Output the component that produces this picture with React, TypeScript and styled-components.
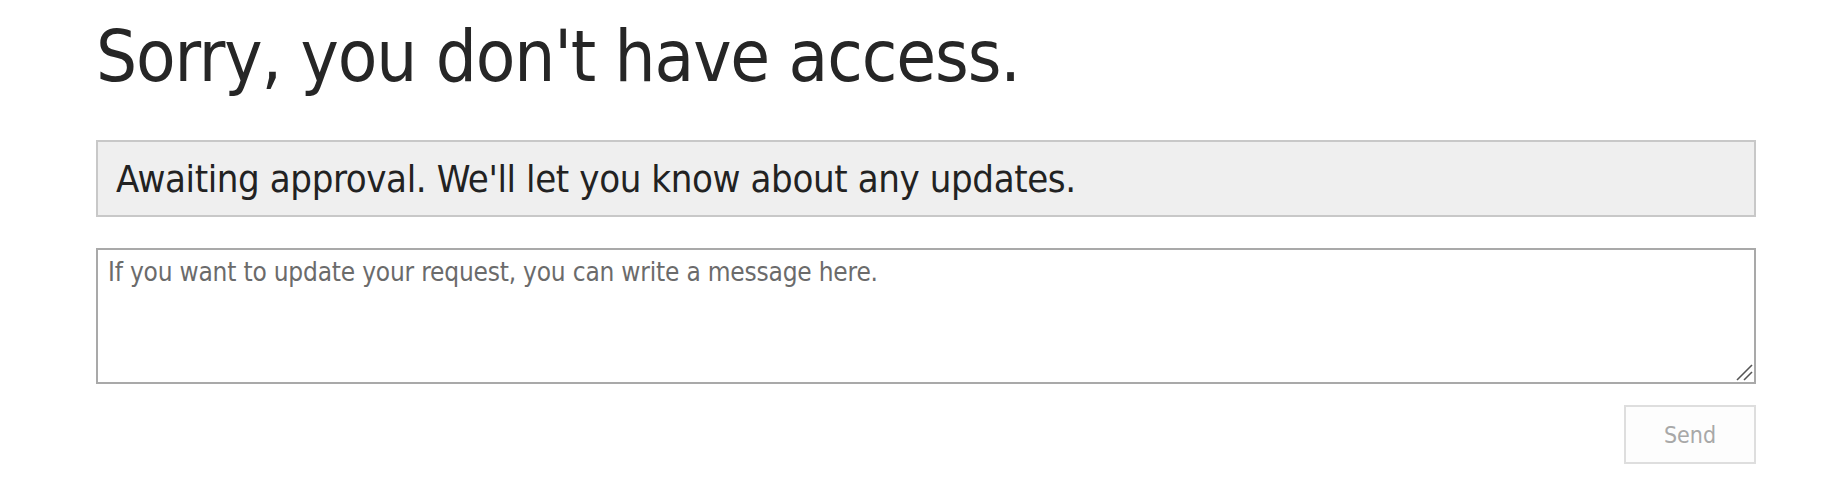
import React from "react";
import styled, { createGlobalStyle } from "styled-components";

const GlobalStyle = createGlobalStyle`
  html, body {
    margin: 0;
    padding: 0;
    background: #ffffff;
  }
  body {
    font-family: "DejaVu Sans Condensed", "DejaVu Sans", sans-serif;
    font-stretch: condensed;
  }
`;

const Page = styled.main`
  display: flex;
  flex-direction: column;
  padding: 20px 88px 0 96px;
  font-family: "DejaVu Sans Condensed", "DejaVu Sans", sans-serif;
  font-stretch: condensed;
`;

const Title = styled.h1`
  margin: 0;
  font-size: 72px;
  line-height: 72px;
  font-weight: normal;
  letter-spacing: -1.1px;
  color: #262626;
`;

const StatusBanner = styled.div`
  margin-top: 48px;
  padding: 15px 18px 14px;
  background: #efefef;
  border: 2px solid #c8c8c8;
  font-size: 38px;
  line-height: 44px;
  letter-spacing: -0.4px;
  color: #222222;
`;

const MessageField = styled.div`
  position: relative;
  margin-top: 31px;
`;

const MessageBox = styled.textarea`
  display: block;
  box-sizing: border-box;
  width: 100%;
  height: 136px;
  padding: 7px 10px;
  border: 2px solid #a9a9a9;
  border-radius: 0;
  outline: none;
  font-family: "DejaVu Sans Condensed", "DejaVu Sans", sans-serif;
  font-stretch: condensed;
  font-size: 26px;
  letter-spacing: -0.2px;
  color: #333333;
  background: #ffffff;
  resize: none;

  &::placeholder {
    color: #6b6b6b;
    opacity: 1;
  }
`;

const Grip = styled.svg`
  position: absolute;
  right: 3px;
  bottom: 3px;
  width: 17px;
  height: 17px;
  pointer-events: none;
`;

const Actions = styled.div`
  display: flex;
  justify-content: flex-end;
  margin-top: 21px;
`;

const SendButton = styled.button`
  box-sizing: border-box;
  width: 132px;
  height: 59px;
  padding: 0;
  background: #fdfdfd;
  border: 2px solid #dedede;
  border-radius: 0;
  font-family: "DejaVu Sans Condensed", "DejaVu Sans", sans-serif;
  font-stretch: condensed;
  font-size: 23px;
  color: #a8a8a8;
  cursor: default;
`;

export default function App() {
  return (
    <>
      <GlobalStyle />
      <Page>
        <Title>Sorry, you don't have access.</Title>
        <StatusBanner>Awaiting approval. We'll let you know about any updates.</StatusBanner>
        <MessageField>
          <MessageBox placeholder="If you want to update your request, you can write a message here." />
          <Grip viewBox="0 0 17 17" aria-hidden="true">
            <line x1="1" y1="16" x2="16" y2="1" stroke="#555" strokeWidth="1.6" />
            <line x1="8" y1="16" x2="16" y2="8" stroke="#555" strokeWidth="1.6" />
          </Grip>
        </MessageField>
        <Actions>
          <SendButton disabled>Send</SendButton>
        </Actions>
      </Page>
    </>
  );
}
